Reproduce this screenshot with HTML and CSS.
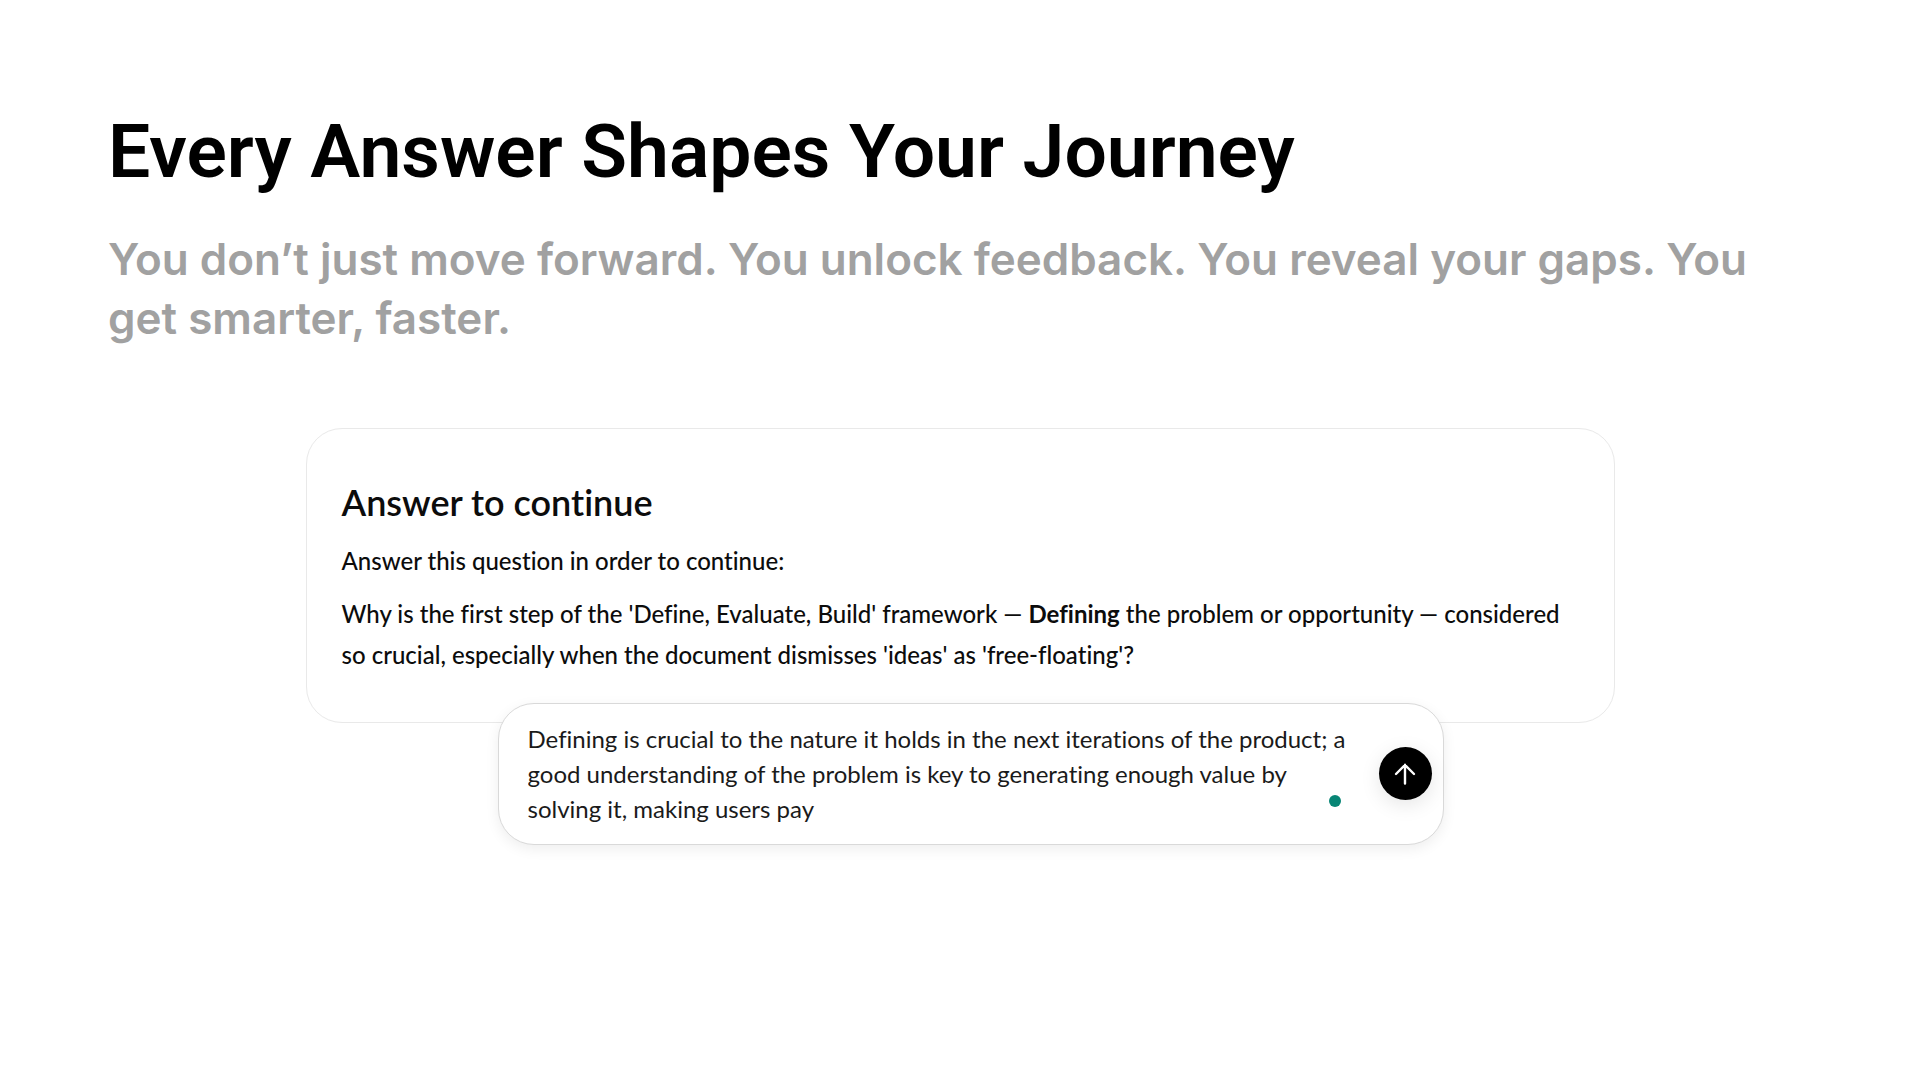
FILE: index.html
```
<!DOCTYPE html>
<html lang="en">
<head>
    <meta charset="UTF-8">
    <meta name="viewport" content="width=device-width, initial-scale=1.0">
    <title>Every Answer Shapes Your Journey</title>
    <link rel="stylesheet" href="styles.css">
</head>
<body>
    <main class="page">
        <h1 class="title">Every Answer Shapes Your Journey</h1>
        <p class="subtitle">You don’t just move forward. You unlock feedback. You reveal your gaps. You get smarter, faster.</p>

        <div class="demo">
            <section class="card">
                <h2 class="card-title">Answer to continue</h2>
                <p>Answer this question in order to continue:</p>
                <p>Why is the first step of the 'Define, Evaluate, Build' framework — <strong>Defining</strong> the problem or opportunity — considered so crucial, especially when the document dismisses 'ideas' as 'free-floating'?</p>
            </section>

            <form class="composer">
                <textarea class="answer" rows="3" aria-label="Your answer" spellcheck="false">Defining is crucial to the nature it holds in the next iterations of the product; a good understanding of the problem is key to generating enough value by solving it, making users pay</textarea>
                <span class="status-dot"></span>
                <button class="send-btn" type="button" aria-label="Send answer">
                    <svg width="22" height="22" viewBox="0 0 22 22" fill="none" stroke="currentColor" stroke-width="2.4" stroke-linecap="round">
                        <path d="M11 20.5V2M2 11l9-9 9 9"/>
                    </svg>
                </button>
            </form>
        </div>
    </main>
</body>
</html>
```
FILE: styles.css
```
* {
    box-sizing: border-box;
}

body {
    margin: 0;
    background-color: #fff;
    color: #000;
    font-family: Lato, sans-serif;
    font-variant-ligatures: none;
}

.page {
    padding: 106px 108px;
}

.title {
    margin: 0 0 34px;
    font-family: Roboto, sans-serif;
    font-size: 75px;
    font-weight: 600;
    line-height: 90px;
}

.subtitle {
    margin: 0 0 80px;
    color: #a1a1a1;
    font-family: Inter, sans-serif;
    font-size: 44px;
    font-weight: 600;
    line-height: 59px;
}

.demo {
    display: flex;
    flex-direction: column;
    max-width: 1309px;
    margin: 0 auto;
}

.card {
    padding: 52px 35px 47px;
    border: 1px solid #e9e9e9;
    border-radius: 36px;
    color: #0c0c0c;
    font-size: 24px;
    font-weight: 500;
    line-height: 41px;
}

.card p {
    margin: 0 0 12px;
}

.card p:last-child {
    margin-bottom: 0;
}

.card-title {
    margin: 0 0 16px;
    font-size: 36px;
    font-weight: 600;
    line-height: 43px;
}

/* sits over the bottom edge of the card */
.composer {
    position: relative;
    display: flex;
    align-items: center;
    gap: 20px;
    width: 100%;
    max-width: 946px;
    margin: -20px 171px 0 auto;
    padding: 17px 11px 18px 29px;
    border: 1px solid #d9d9d9;
    border-radius: 36px;
    background-color: #fff;
    box-shadow: 0 4px 14px rgba(0, 0, 0, 0.07);
}

.answer {
    flex: 1;
    padding: 0;
    border: none;
    outline: none;
    resize: none;
    overflow: hidden;
    background: transparent;
    color: #1a1a1a;
    font-family: inherit;
    font-variant-ligatures: inherit;
    font-size: 24px;
    line-height: 35px;
}

.status-dot {
    position: absolute;
    right: 102px;
    bottom: 37px;
    width: 12px;
    height: 12px;
    border-radius: 50%;
    background-color: #078575;
}

.send-btn {
    display: flex;
    align-items: center;
    justify-content: center;
    flex-shrink: 0;
    width: 53px;
    height: 53px;
    padding: 0;
    border: none;
    border-radius: 50%;
    background-color: #000;
    color: #fff;
    box-shadow: 0 5px 20px rgba(0, 0, 0, 0.1);
    cursor: pointer;
}
```
